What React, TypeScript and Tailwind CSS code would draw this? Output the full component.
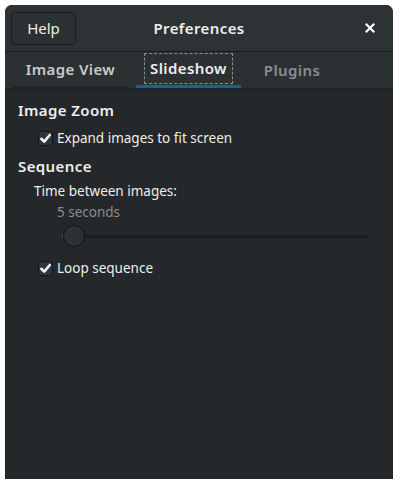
import React from "react";

const font = { fontFamily: '"Noto Sans", "Open Sans", sans-serif' };

function Check() {
  return (
    <span className="w-[15px] h-[15px] rounded-[3px] border border-[#141719] bg-[#303538] flex items-center justify-center">
      <svg width="13" height="13" viewBox="0 0 13 13">
        <path d="M2.3 6.8 L5.2 9.6 L10.8 3.0" fill="none" stroke="#f4f4f2" strokeWidth="2.6" strokeLinecap="round" strokeLinejoin="round" />
      </svg>
    </span>
  );
}

export default function App() {
  return (
    <div className="w-[402px] h-[488px] bg-white pt-[5px] pl-[5px]" style={font}>
      <div className="w-[388px] h-[474px] rounded-t-[7px] overflow-hidden bg-[#24282a] flex flex-col text-[#eeeeec]">
        <div className="h-[47px] shrink-0 bg-[#2d3234] border-b border-[#1b1e1f] flex items-center px-[6px] relative">
          <button className="w-[65px] h-[33px] rounded-[4px] border border-[#1a1d1e] bg-[#2b3032] text-[15px] text-[#eeeeec] flex items-center justify-center">
            Help
          </button>
          <div className="absolute left-0 right-0 top-0 h-[46px] flex items-center justify-center pointer-events-none">
            <span className="text-[15px] font-semibold tracking-[0.4px]">Preferences</span>
          </div>
          <div className="ml-auto mr-[12px] text-white">
            <svg width="10" height="10" viewBox="0 0 10 10">
              <path d="M1.5 1.5 L8.5 8.5 M8.5 1.5 L1.5 8.5" stroke="#ffffff" strokeWidth="2.2" strokeLinecap="square" />
            </svg>
          </div>
        </div>
        <div className="h-[37px] shrink-0 bg-[#2b3032] border-b border-[#1f2224] flex items-stretch pl-[8px] gap-[8px]">
          <div className="w-[115px] flex items-center justify-center border-b-[2px] border-[#212527] text-[15px] font-semibold tracking-[0.4px] text-[#c9cbcb]">
            Image View
          </div>
          <div className="w-[105px] flex items-center justify-center border-b-[3px] border-[#215d9c]">
            <span className="px-[5px] py-[3px] border border-dashed border-[#8a8d8e] text-[15px] font-semibold tracking-[0.4px] text-[#eeeeec]">Slideshow</span>
          </div>
          <div className="w-[86px] flex items-center justify-center text-[15px] font-semibold tracking-[0.4px] text-[#8b8e8f]">
            Plugins
          </div>
        </div>
        <div className="flex flex-col pl-[13px] pt-[11px]">
          <div className="h-[20px] flex items-center text-[15px] font-semibold tracking-[0.4px]">Image Zoom</div>
          <div className="flex items-center gap-[4px] ml-[20px] mt-[9px] h-[18px]">
            <Check />
            <span className="text-[13.5px]">Expand images to fit screen</span>
          </div>
          <div className="h-[20px] flex items-center text-[15px] font-semibold tracking-[0.4px] mt-[9px]">Sequence</div>
          <div className="h-[20px] flex items-center ml-[16px] mt-[5px] text-[13.5px]">Time between images:</div>
          <div className="h-[20px] flex items-center ml-[39px] mt-[1px] text-[13.5px] text-[#8b8e8f]">5 seconds</div>
          <div className="ml-[44px] mr-[25px] mt-[2px] h-[24px] relative flex items-center">
            <div className="w-full h-[3px] rounded-full bg-[#1b1e20]" />
            <div className="absolute left-0 top-1/2 -translate-y-1/2 w-[3px] h-[3px] bg-[#215d9c]" />
            <div className="absolute left-[1px] top-1/2 -translate-y-1/2 w-[22px] h-[22px] rounded-full border border-[#111314] bg-[#2c3133]" />
          </div>
          <div className="flex items-center gap-[4px] ml-[20px] mt-[11px] h-[18px]">
            <Check />
            <span className="text-[13.5px]">Loop sequence</span>
          </div>
        </div>
      </div>
    </div>
  );
}
